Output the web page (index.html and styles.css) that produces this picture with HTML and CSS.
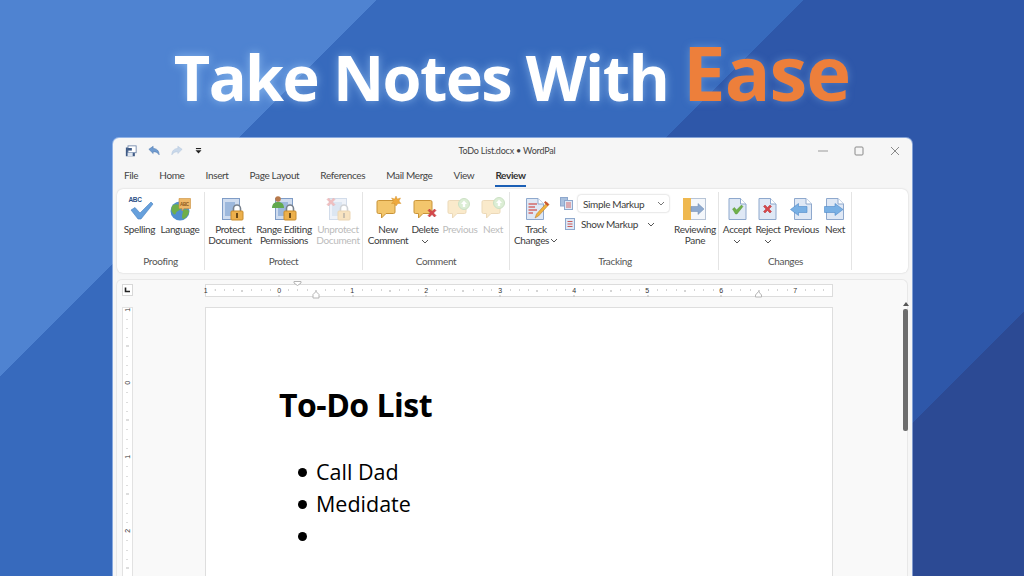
FILE: index.html
```html
<!DOCTYPE html>
<html lang="en">
<head>
  <meta charset="UTF-8" />
  <title>Take Notes With Ease</title>
  <link rel="stylesheet" href="styles.css">
</head>
<body>

  <!-- Shared icon parts -->
  <svg class="defs" width="0" height="0">
    <defs>
      <g id="page">
        <path d="M0.5 0.5H12L17.5 6V21.5H0.5Z" fill="#dfe8f5" stroke="#8ea8cd"/>
        <path d="M12 0.5V6H17.5" fill="#fff" stroke="#8ea8cd"/>
      </g>
      <g id="lockdoc">
        <rect x="0.5" y="0.5" width="17" height="21" fill="#cfdcef" stroke="#7f9cc6"/>
        <rect x="3" y="4" width="10" height="14" fill="#9db8dc"/>
        <path d="M11.5 13V10.5a3.5 3.5 0 0 1 7 0V13" fill="#fff" stroke="#77808c" stroke-width="1.6"/>
        <rect x="9" y="13" width="12" height="9" rx="1" fill="#ecb04c" stroke="#c98d2c"/>
        <rect x="14" y="15" width="2" height="5" fill="#6b4a17"/>
      </g>
      <g id="bubble">
        <path d="M1.5 0.5H16.5Q18 0.5 18 2V12Q18 13.5 16.5 13.5H9L4.5 18V13.5H1.5Q0 13.5 0 12V2Q0 0.5 1.5 0.5Z" fill="#f3c66c" stroke="#c99438"/>
      </g>
      <g id="redx">
        <path d="M-4 -2.5L-2.5 -4L0 -1.5L2.5 -4L4 -2.5L1.5 0L4 2.5L2.5 4L0 1.5L-2.5 4L-4 2.5L-1.5 0Z" fill="#d6474a" stroke="#b23236" stroke-width=".5"/>
      </g>
      <g id="upball">
        <circle r="5.5" fill="#9ccf88" stroke="#6da858"/>
        <path d="M0 -3.5L3 0H1.2V3H-1.2V0H-3Z" fill="#fff"/>
      </g>
    </defs>
  </svg>

  <h1 class="headline">Take Notes With <span class="headline-accent">Ease</span></h1>

  <div class="window">

    <!-- Title bar -->
    <div class="titlebar">
      <div class="qat">
        <svg class="qat-icon" viewBox="0 0 14 14">
          <path d="M1 3H9.5L11.5 5V13H1Z" fill="#3f5a85"/>
          <rect x="3.5" y="1" width="9.5" height="8" fill="#fff" stroke="#6d84a8"/>
          <rect x="3" y="9" width="6" height="4" fill="#dfe6f0"/>
          <rect x="3" y="3.5" width="5" height="3" fill="#3f5a85"/>
        </svg>
        <svg class="qat-icon" viewBox="0 0 14 14">
          <path d="M1 5L6 1.5V4C10 4 13 6.5 13 11.5C11.5 9 9.5 7.8 6 7.8V10Z" fill="#6f9bd0" stroke="#4b76ad" stroke-width=".6"/>
        </svg>
        <svg class="qat-icon qat-off" viewBox="0 0 14 14">
          <path d="M13 5L8 1.5V4C4 4 1 6.5 1 11.5C2.500 9 4.500 7.800 8 7.800V10Z" fill="#c9d8ea" stroke="#b3c6de" stroke-width=".6"/>
        </svg>
        <svg class="qat-drop" viewBox="0 0 8 7">
          <rect x="1" y="0" width="6" height="1.300" fill="#222"/>
          <path d="M0.500 2.500H7.500L4 6.500Z" fill="#222"/>
        </svg>
      </div>
      <div class="doc-title">ToDo List.docx • WordPal</div>
      <div class="win-btns">
        <svg class="win-btn" viewBox="0 0 10 10"><path d="M0 5H10" stroke="#9a9a9a"/></svg>
        <svg class="win-btn" viewBox="0 0 10 10"><rect x="1" y="1" width="8" height="8" rx="1" fill="none" stroke="#8a8a8a"/></svg>
        <svg class="win-btn" viewBox="0 0 10 10"><path d="M1 1L9 9M9 1L1 9" stroke="#8a8a8a"/></svg>
      </div>
    </div>

    <!-- Tabs -->
    <div class="tabs">
      <span class="tab">File</span>
      <span class="tab">Home</span>
      <span class="tab">Insert</span>
      <span class="tab">Page Layout</span>
      <span class="tab">References</span>
      <span class="tab">Mail Merge</span>
      <span class="tab">View</span>
      <span class="tab tab-active">Review</span>
    </div>

    <!-- Ribbon -->
    <div class="ribbon">

      <div class="group group-proofing">
        <div class="group-btns">
          <div class="btn w37">
            <svg class="ico" viewBox="0 0 32 28">
              <text x="4.500" y="9" class="ico-text">ABC</text>
              <path d="M7 17L11 14.500L16 20L27 9L29 11L17 26H14Z" fill="#66a0dc" stroke="#4a82c0" stroke-width=".6"/>
            </svg>
            <span>Spelling</span>
          </div>
          <div class="btn w44">
            <svg class="ico" viewBox="0 0 32 28">
              <circle cx="16" cy="18" r="9.500" fill="#4f8fd0"/>
              <path d="M9 12C13 10 17 12 17 15C17 18 13 17 12 20C11 23 9 21 7.500 18C7 15 8 13 9 12Z" fill="#6fae4a"/>
              <path d="M19 17C23 15 25 17 25 19C24 23 21 26 19 26C17 24 19 20 19 17Z" fill="#6fae4a"/>
              <path d="M15 5.500H26.500V15.500H20L18 18V15.500H15Z" fill="#edb868" stroke="#c98e3c" stroke-width=".6"/>
              <text x="16" y="12.500" class="ico-text-sm">ABC</text>
            </svg>
            <span>Language</span>
          </div>
        </div>
        <div class="group-name">Proofing</div>
      </div>

      <div class="group group-protect">
        <div class="group-btns">
          <div class="btn w48">
            <svg class="ico" viewBox="0 0 32 28"><use href="#lockdoc" x="8" y="5"/></svg>
            <span>Protect<br>Document</span>
          </div>
          <div class="btn w60">
            <svg class="ico" viewBox="0 0 32 28">
              <use href="#lockdoc" x="7" y="5"/>
              <circle cx="10" cy="6" r="2.800" fill="#b8794a"/>
              <path d="M4 15C4 10.500 7 9 10 9C13 9 16 10.500 16 15Z" fill="#62a84e"/>
            </svg>
            <span>Range Editing<br>Permissions</span>
          </div>
          <div class="btn w48 btn-off">
            <svg class="ico" viewBox="0 0 32 28">
              <use href="#lockdoc" x="7" y="5"/>
              <use href="#redx" x="9" y="9"/>
            </svg>
            <span>Unprotect<br>Document</span>
          </div>
        </div>
        <div class="group-name">Protect</div>
      </div>

      <div class="group group-comment">
        <div class="group-btns">
          <div class="btn w40">
            <svg class="ico" viewBox="0 0 32 28">
              <use href="#bubble" x="5" y="7"/>
              <path d="M24 3L25.300 6L28.500 5L27 8L29 10.500L26 10.500L24 13L22.500 10.500L19.500 10.500L21.500 8L19.500 5L22.700 6Z" fill="#eea93c" stroke="#d08a24" stroke-width=".4"/>
            </svg>
            <span>New<br>Comment</span>
          </div>
          <div class="btn w34">
            <svg class="ico" viewBox="0 0 32 28">
              <use href="#bubble" x="5" y="7"/>
              <use href="#redx" x="23" y="20"/>
            </svg>
            <span>Delete</span>
            <svg class="chev" viewBox="0 0 8 5"><path d="M1 1L4 4L7 1" fill="none" stroke="#555"/></svg>
          </div>
          <div class="btn w36 btn-off">
            <svg class="ico" viewBox="0 0 32 28">
              <use href="#bubble" x="4" y="7"/>
              <use href="#upball" x="20" y="11"/>
            </svg>
            <span>Previous</span>
          </div>
          <div class="btn w30 btn-off">
            <svg class="ico" viewBox="0 0 32 28">
              <use href="#bubble" x="5" y="7"/>
              <use href="#upball" x="22" y="10"/>
            </svg>
            <span>Next</span>
          </div>
        </div>
        <div class="group-name">Comment</div>
      </div>

      <div class="group group-tracking">
        <div class="group-btns">
          <div class="btn w48">
            <svg class="ico" viewBox="0 0 32 28">
              <use href="#page" x="6" y="5"/>
              <path d="M8.500 11H17M8.500 14H15M8.500 17H17M8.500 20H13" stroke="#d46a6a" stroke-width="1.300"/>
              <path d="M27 9.500L29 11.500L18.500 23L15 25L16.500 21Z" fill="#eeb23e" stroke="#b5742a" stroke-width=".5"/>
              <path d="M25.500 8L29 11.500L27.500 13L24 9.500Z" fill="#c9532f"/>
            </svg>
            <span>Track<br>Changes<svg class="chev-inline" viewBox="0 0 8 5"><path d="M1 1L4 4L7 1" fill="none" stroke="#555"/></svg></span>
          </div>
          <div class="markup">
            <div class="markup-row">
              <svg class="ico-small" viewBox="0 0 13 13">
                <rect x="0.500" y="0.500" width="7" height="8.500" fill="#a9c0de" stroke="#8ea8cd"/>
                <rect x="4.500" y="3.500" width="8" height="9" fill="#dfe8f5" stroke="#8ea8cd"/>
                <path d="M6 6H11M6 8H11M6 10H11" stroke="#d46a6a"/>
              </svg>
              <div class="markup-select">
                <span>Simple Markup</span>
                <svg class="chev" viewBox="0 0 8 5"><path d="M1 1L4 4L7 1" fill="none" stroke="#777"/></svg>
              </div>
            </div>
            <div class="markup-row markup-row-show">
              <svg class="ico-small ico-show" viewBox="0 0 10 12">
                <rect x="0.500" y="0.500" width="9" height="11" fill="#dfe8f5" stroke="#8ea8cd"/>
                <path d="M2.500 3.500H7.500M2.500 6H7.500M2.500 8.500H7.500" stroke="#c85a5a"/>
              </svg>
              <span>Show Markup</span>
              <svg class="chev" viewBox="0 0 8 5"><path d="M1 1L4 4L7 1" fill="none" stroke="#555"/></svg>
            </div>
          </div>
          <div class="btn w48">
            <svg class="ico" viewBox="0 0 32 28">
              <rect x="4.500" y="5.500" width="22" height="21" fill="#f4f7fb" stroke="#b7c4d6"/>
              <rect x="4" y="5" width="8" height="22" fill="#efb84f"/>
              <path d="M12 13.500H19V10.500L25 16L19 21.500V18.500H12Z" fill="#8da9cf" stroke="#6d88ae" stroke-width=".5"/>
            </svg>
            <span>Reviewing<br>Pane</span>
          </div>
        </div>
        <div class="group-name">Tracking</div>
      </div>

      <div class="group group-changes">
        <div class="group-btns">
          <div class="btn w34">
            <svg class="ico" viewBox="0 0 32 28">
              <use href="#page" x="7.500" y="5"/>
              <path d="M11.500 16L13.500 14.500L15.500 17L20.500 12L22 13.500L16 21H14.500Z" fill="#6fb04a" stroke="#4f8c32" stroke-width=".4"/>
            </svg>
            <span>Accept</span>
            <svg class="chev" viewBox="0 0 8 5"><path d="M1 1L4 4L7 1" fill="none" stroke="#555"/></svg>
          </div>
          <div class="btn w28">
            <svg class="ico" viewBox="0 0 32 28">
              <use href="#page" x="6.500" y="5"/>
              <use href="#redx" x="15.500" y="16"/>
            </svg>
            <span>Reject</span>
            <svg class="chev" viewBox="0 0 8 5"><path d="M1 1L4 4L7 1" fill="none" stroke="#555"/></svg>
          </div>
          <div class="btn w39">
            <svg class="ico" viewBox="0 0 32 28">
              <use href="#page" x="8" y="5"/>
              <path d="M4.500 16.500L12.500 10.500V13.500H21V19.500H12.500V22.500Z" fill="#79b0e4" stroke="#4f8aca" stroke-width=".6"/>
            </svg>
            <span>Previous</span>
          </div>
          <div class="btn w28">
            <svg class="ico" viewBox="0 0 32 28">
              <use href="#page" x="7" y="5"/>
              <path d="M24 16.500L16 10.500V13.500H5.500V19.500H16V22.500Z" fill="#79b0e4" stroke="#4f8aca" stroke-width=".6"/>
            </svg>
            <span>Next</span>
          </div>
        </div>
        <div class="group-name">Changes</div>
      </div>
    </div>

    <!-- Document area -->
    <div class="doc-area">
      <div class="ruler-row">
        <svg class="corner" viewBox="0 0 11 12">
          <rect x="0.500" y="0.500" width="10" height="11" fill="#fff" stroke="#d8d8d8"/>
          <path d="M3.500 3.500V7.500H8" fill="none" stroke="#222" stroke-width="1.600"/>
        </svg>
        <svg class="hruler" viewBox="0 0 628 20">
          <rect x="0.500" y="3.500" width="627" height="12" fill="#fff" stroke="#dcdcdc"/>
          <path d="M9.700 9H11M19 9H20M28 9H29M37 9V11M46 9H47M56 9H57M65 9H66M83 9H84M92 9H93M102 9H103M111 9V11M120 9H121M129 9H130M139 9H140M157 9H158M166 9H167M176 9H177M185 9V11M194 9H195M203 9H204M213 9H214M231 9H232M240 9H241M249 9H250M258 9V11M268 9H269M277 9H278M286 9H287M305 9H306M314 9H315M323 9H324M332 9V11M342 9H343M351 9H352M360 9H361M378 9H379M388 9H389M397 9H398M406 9V11M415 9H416M425 9H426M434 9H435M452 9H453M461 9H462M471 9H472M480 9V11M489 9H490M498 9H499M508 9H509M526 9H527M535 9H536M545 9H546M554 9V11M563 9H564M572 9H573M582 9H583M600 9H601M609 9H610M618 9H619" stroke="#aaa"/>
          <path d="M74 14V16M148 14V16M221 14V16M295 14V16M369 14V16M443 14V16M516 14V16" stroke="#bbb"/>
          <g class="ruler-text">
            <text x="0.500" y="12">1</text>
            <text x="74" y="12">0</text>
            <text x="147" y="12">1</text>
            <text x="221" y="12">2</text>
            <text x="295" y="12">3</text>
            <text x="369" y="12">4</text>
            <text x="442" y="12">5</text>
            <text x="516" y="12">6</text>
            <text x="590" y="12">7</text>
          </g>
          <path d="M89 0.500H96V2L92.500 4.500L89 2Z" fill="#fff" stroke="#b5b5b5"/>
          <path d="M108 13.500L111 10.500L114 13.500V17H108Z" fill="#fff" stroke="#b5b5b5"/>
          <path d="M550.500 14L553.500 10.500L556.500 14V16H550.500Z" fill="#fff" stroke="#b5b5b5"/>
        </svg>
      </div>
      <div class="doc-row">
        <svg class="vruler" viewBox="0 0 11 280">
          <rect x="0.500" y="0.500" width="10" height="290" fill="#fff" stroke="#e2e2e2"/>
          <path d="M5 12V13M5 21V22M5 30V31M4 39H7M5 49V50M5 58V59M5 67V68M5 85V86M5 95V96M5 104V105M4 113H7M5 122V123M5 132V133M5 141V142M5 159V160M5 169V170M5 178V179M4 187H7M5 196V197M5 206V207M5 215V216M5 233V234M5 243V244M5 252V253M4 261H7M5 270V271" stroke="#bbb"/>
          <g class="ruler-text">
            <text transform="translate(7.500 3) rotate(-90)">1</text>
            <text transform="translate(7.500 76) rotate(-90)">0</text>
            <text transform="translate(7.500 150) rotate(-90)">1</text>
            <text transform="translate(7.500 224) rotate(-90)">2</text>
          </g>
        </svg>
        <div class="page">
          <h2 class="page-title">To-Do List</h2>
          <ul class="todo">
            <li>Call Dad</li>
            <li>Medidate</li>
            <li></li>
          </ul>
        </div>
        <div class="scrollbar">
          <div class="scroll-arrow"></div>
          <div class="scroll-thumb"></div>
        </div>
      </div>
    </div>
  </div>

</body>
</html>
```

FILE: styles.css
```css
html, body {
  height: 100%;
}

body {
  margin: 0;
  height: 576px;
  overflow: hidden;
  display: flex;
  flex-direction: column;
  font-family: Lato, "Open Sans", sans-serif;
  background: linear-gradient(135deg,
    #4f83d1 0, #4f83d1 23.56%,
    #376abd 23.56%, #376abd 50.19%,
    #2e57a9 50.19%, #2e57a9 83.44%,
    #2c4a94 83.44%);
}

.defs {
  position: absolute;
}

.headline {
  margin: 0;
  height: 138px;
  flex: none;
  box-sizing: border-box;
  padding-top: 27px;
  text-align: center;
  font-family: "Open Sans", sans-serif;
  font-size: 63px;
  line-height: 90px;
  font-weight: 700;
  color: #fff;
  letter-spacing: -1.6px;
  text-shadow: 0 0 10px rgba(170, 215, 255, 0.6);
  white-space: nowrap;
}

.headline-accent {
  font-size: 76px;
  letter-spacing: -1px;
  color: #ed7f3b;
  text-shadow: 0 0 8px rgba(170, 215, 255, 0.35);
}

.window {
  flex: 1;
  min-height: 0;
  margin: 0 112px 0 113px;
  background: #f6f6f6;
  border-radius: 6px 6px 0 0;
  box-shadow: 0 0 0 1px rgba(190, 212, 245, 0.6);
  display: flex;
  flex-direction: column;
  color: #3c3c3c;
  font-size: 10px;
  letter-spacing: -0.35px;
}

/* Title bar */
.titlebar {
  height: 25px;
  flex: none;
  display: grid;
  grid-template-columns: 1fr auto 1fr;
  align-items: center;
  padding: 0 12px;
}

.qat {
  display: flex;
  align-items: center;
  gap: 11px;
}

.qat-icon {
  width: 12px;
  height: 12px;
}

.qat-drop {
  width: 7px;
  height: 6px;
  margin-left: 1px;
}

.doc-title {
  padding-right: 11px;
  color: #444;
  font-size: 9px;
  letter-spacing: -0.2px;
}

.win-btns {
  display: flex;
  justify-content: flex-end;
  gap: 26px;
}

.win-btn {
  width: 10px;
  height: 10px;
}

/* Tabs */
.tabs {
  height: 26px;
  flex: none;
  display: flex;
  gap: 21px;
  padding-left: 11px;
  box-sizing: border-box;
}

.tab {
  line-height: 25px;
  color: #444;
}

.tab-active {
  font-weight: 700;
  color: #333;
  height: 22px;
  border-bottom: 2px solid #1b5fb5;
}

/* Ribbon */
.ribbon {
  height: 84px;
  flex: none;
  margin: 0 4px 0 4px;
  background: #fff;
  border-radius: 6px;
  box-shadow: 0 0 2px rgba(0, 0, 0, 0.18);
  display: flex;
  padding: 3px 0;
  box-sizing: border-box;
}

.group {
  display: flex;
  flex-direction: column;
  border-right: 1px solid #e4e4e4;
  box-sizing: border-box;
}

.group-proofing { width: 88px; padding-left: 4px; }
.group-protect { width: 158px; padding-left: 1px; }
.group-comment { width: 147px; padding-left: 5px; }
.group-tracking { width: 209px; padding-left: 2px; }
.group-changes { width: 133px; padding-left: 1px; }

.group-btns {
  flex: 1;
  display: flex;
}

.group-name {
  height: 18px;
  text-align: center;
  color: #555;
  line-height: 18px;
}

.group-proofing .group-name { padding-right: 4px; }
.group-protect .group-name { padding-right: 1px; }
.group-comment .group-name { padding-right: 5px; }

.btn {
  display: flex;
  flex-direction: column;
  align-items: center;
  text-align: center;
  white-space: nowrap;
  line-height: 11px;
  flex: none;
}

.btn > span {
  margin-top: 3px;
}

.btn-off {
  color: #bcbcbc;
}

.btn-off .ico {
  opacity: 0.35;
}

.w28 { width: 28px; }
.w30 { width: 30px; }
.w34 { width: 34px; }
.w36 { width: 36px; }
.w37 { width: 37px; }
.w39 { width: 39px; }
.w40 { width: 40px; }
.w44 { width: 44px; }
.w48 { width: 48px; }
.w60 { width: 60px; }

.ico {
  width: 32px;
  height: 28px;
  flex: none;
  margin-top: 1px;
}

.ico-text {
  font: 700 6.500px "Liberation Sans", sans-serif;
  fill: #2c4f85;
}

.ico-text-sm {
  font: 700 4.500px "Liberation Sans", sans-serif;
  fill: #8a5a20;
}

.chev {
  width: 8px;
  height: 5px;
  margin-top: 4px;
  flex: none;
}

.chev-inline {
  width: 8px;
  height: 5px;
  margin-left: 1px;
  vertical-align: 1px;
}

.markup {
  width: 111px;
  flex: none;
  display: flex;
  flex-direction: column;
  gap: 6px;
  padding-top: 3px;
}

.markup-row {
  display: flex;
  align-items: center;
  gap: 5px;
}

.markup-row .chev {
  margin-top: 0;
}

.markup-row-show {
  padding-left: 5px;
  gap: 6px;
}

.markup-row-show .chev {
  margin-left: 3px;
}

.ico-small {
  width: 13px;
  height: 13px;
  flex: none;
}

.ico-show {
  width: 10px;
  height: 12px;
}

.markup-select {
  width: 91px;
  height: 17px;
  box-sizing: border-box;
  padding: 0 4px 0 5px;
  display: flex;
  align-items: center;
  justify-content: space-between;
  background: #fff;
  border-radius: 3px;
  box-shadow: 0 0 2px rgba(0, 0, 0, 0.3);
}

/* Document area */
.doc-area {
  flex: 1;
  min-height: 0;
  margin: 6px 4px 0 3px;
  background: #f9f9f9;
  border: 1px solid #e8e8e8;
  border-bottom: none;
  border-radius: 6px 6px 0 0;
  display: flex;
  flex-direction: column;
}

.ruler-row {
  height: 27px;
  flex: none;
  display: flex;
  padding-left: 5px;
}

.corner {
  width: 11px;
  height: 12px;
  margin-top: 4px;
  flex: none;
}

.hruler {
  width: 628px;
  height: 20px;
  margin-left: 72px;
  margin-top: 1px;
  overflow: visible;
  flex: none;
}

.ruler-text {
  font: 7px "Liberation Sans", sans-serif;
  fill: #333;
  text-anchor: middle;
}

.doc-row {
  flex: 1;
  min-height: 0;
  display: flex;
  padding-left: 5px;
}

.vruler {
  width: 11px;
  height: 280px;
  flex: none;
}

.page {
  width: 628px;
  margin-left: 72px;
  flex: none;
  box-sizing: border-box;
  background: #fff;
  border: 1px solid #dedede;
  border-bottom: none;
  padding: 75px 0 0 73px;
  color: #000;
  font-family: "Open Sans", sans-serif;
  letter-spacing: 0;
}

.page-title {
  margin: 0;
  font-size: 32px;
  line-height: 44px;
  font-weight: 700;
  letter-spacing: -0.5px;
}

.todo {
  list-style: none;
  margin: 29px 0 0;
  padding: 0 0 0 19px;
  font-size: 21.500px;
  line-height: 32px;
}

.todo li {
  display: flex;
  align-items: center;
  gap: 9px;
  height: 32px;
}

.todo li::before {
  content: "";
  width: 9px;
  height: 9px;
  border-radius: 50%;
  background: #000;
}

.scrollbar {
  width: 5px;
  margin-left: 70px;
  flex: none;
  display: flex;
  flex-direction: column;
  align-items: center;
}

.scroll-arrow {
  width: 0;
  height: 0;
  margin-top: -5px;
  border-left: 3px solid transparent;
  border-right: 3px solid transparent;
  border-bottom: 4px solid #555;
}

.scroll-thumb {
  width: 5px;
  height: 122px;
  margin-top: 3px;
  background: #6e6e6e;
  border-radius: 2px;
}
```
